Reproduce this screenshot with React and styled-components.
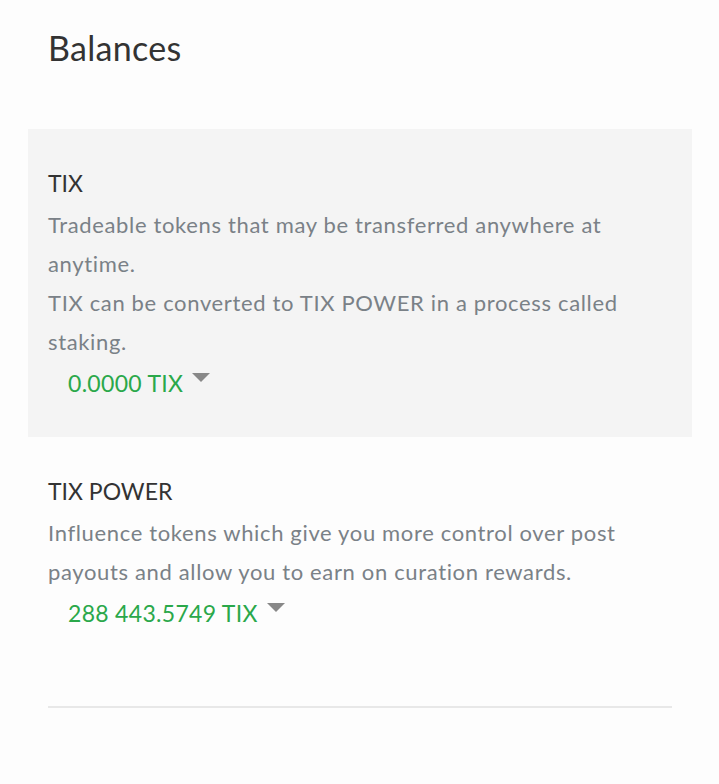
import React from 'react';
import styled, { createGlobalStyle } from 'styled-components';

const Global = createGlobalStyle`
  html, body {
    margin: 0;
    padding: 0;
    background: #fdfdfd;
    font-family: Lato, "Open Sans", "Liberation Sans", sans-serif;
  }
`;

const Page = styled.div`
  padding: 20px 27px 40px 28px;
`;

const Heading = styled.h1`
  margin: 0 0 53px 20px;
  font-size: 34px;
  line-height: 56px;
  font-weight: 400;
  letter-spacing: 0.3px;
  color: #333;
`;

const Section = styled.div`
  padding: 34px 20px;
  background: ${(p) => (p.shaded ? '#f4f4f4' : 'transparent')};
`;

const Title = styled.div`
  font-size: 23px;
  line-height: 40px;
  color: #333;
  margin-bottom: 2px;
`;

const Desc = styled.div`
  font-size: 22px;
  line-height: 39px;
  letter-spacing: 0.65px;
  color: #7a8187;
`;

const Amount = styled.div`
  display: flex;
  align-items: flex-start;
  margin-top: 2px;
  padding-left: 20px;
  font-size: 23px;
  line-height: 40px;
  letter-spacing: 0.3px;
  color: #2aa84a;
`;

const Caret = styled.span`
  width: 0;
  height: 0;
  margin: 10px 0 0 9px;
  border-left: 9px solid transparent;
  border-right: 9px solid transparent;
  border-top: 9px solid #888;
`;

const Divider = styled.hr`
  margin: 39px 20px 0;
  border: 0;
  height: 2px;
  background: #e8e8e8;
`;

const balances = [
  {
    name: 'TIX',
    lines: [
      'Tradeable tokens that may be transferred anywhere at anytime.',
      'TIX can be converted to TIX POWER in a process called staking.',
    ],
    amount: '0.0000 TIX',
    shaded: true,
  },
  {
    name: 'TIX POWER',
    lines: [
      'Influence tokens which give you more control over post payouts and allow you to earn on curation rewards.',
    ],
    amount: '288 443.5749 TIX',
  },
];

const App = () => {
  return (
    <Page>
      <Global />
      <Heading>Balances</Heading>
      {balances.map((b) => (
        <Section key={b.name} shaded={b.shaded}>
          <Title>{b.name}</Title>
          {b.lines.map((l, i) => (
            <Desc key={i}>{l}</Desc>
          ))}
          <Amount>
            {b.amount}
            <Caret />
          </Amount>
        </Section>
      ))}
      <Divider />
    </Page>
  );
};

export default App;
